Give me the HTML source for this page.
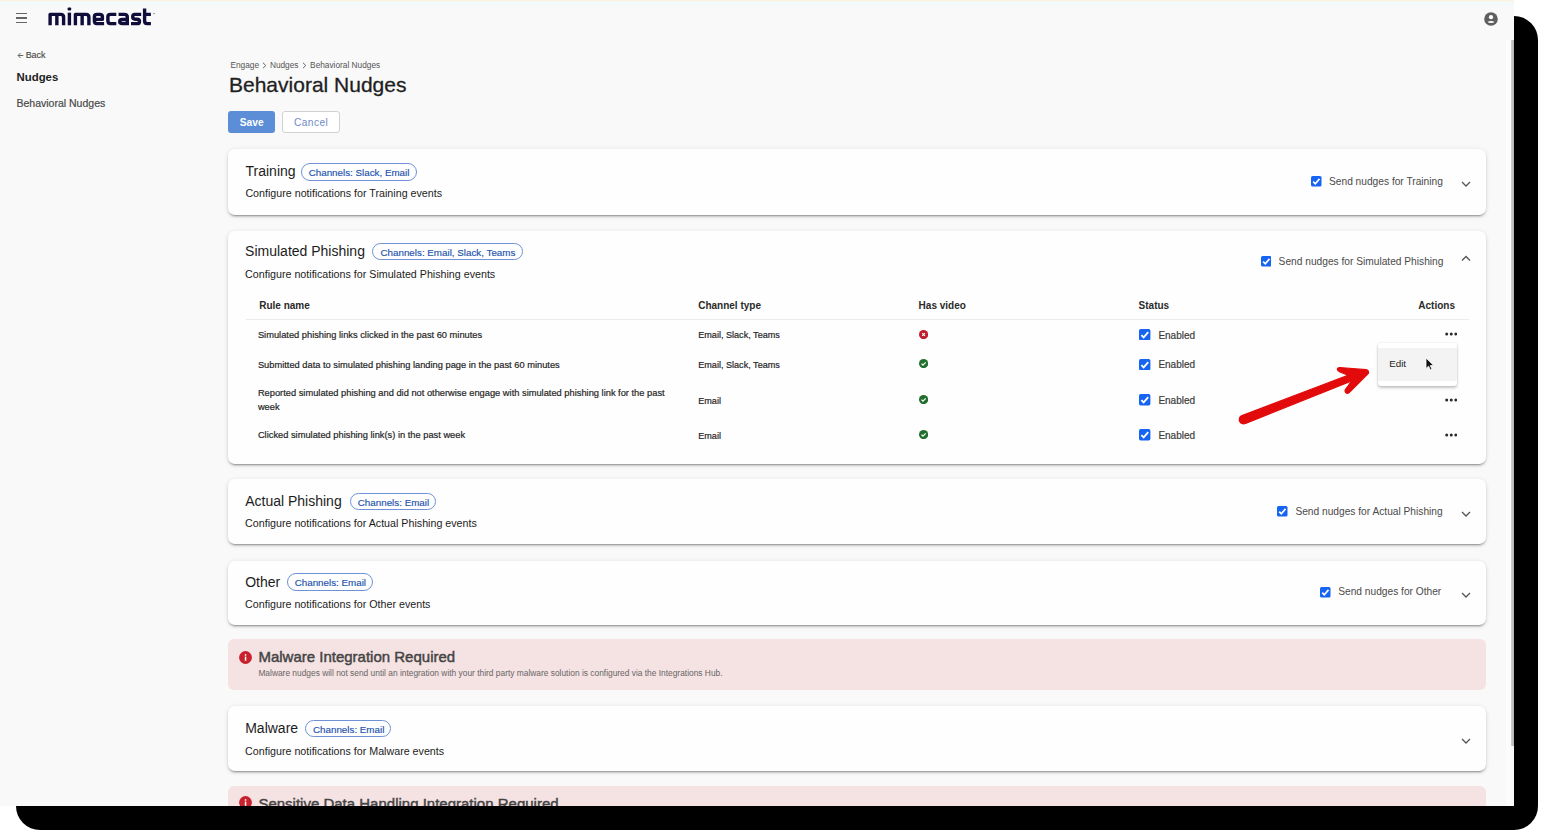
<!DOCTYPE html>
<html><head><meta charset="utf-8"><title>Behavioral Nudges</title>
<style>
html,body{margin:0;padding:0;background:#fff;width:1542px;height:835px;overflow:hidden;}
.shadow{position:absolute;left:16px;top:16px;width:1522px;height:813.5px;background:#000;border-radius:24px;}
.shot{position:absolute;left:0;top:0;width:1514px;height:806px;overflow:hidden;background:#f9f9f9;font-family:'Liberation Sans',sans-serif;}
.t{position:absolute;white-space:nowrap;line-height:1;font-family:'Liberation Sans',sans-serif;}
.topline{position:absolute;left:0;top:0;width:1514px;height:6px;background:linear-gradient(#fdf0dc 0,#fdf4e6 1.2px,#f1fbfd 1.8px,#f3f9fb 5px,#f8f8f9 6px);}
</style></head><body>
<div class="shadow"></div>
<div class="shot">
<div class="topline"></div>
<div style="position:absolute;left:16.2px;top:12.700000000000001px;width:11.100000000000001px;height:1.3999999999999986px;background:#666;"></div>
<div style="position:absolute;left:16.2px;top:17.2px;width:11.100000000000001px;height:1.3999999999999986px;background:#666;"></div>
<div style="position:absolute;left:16.2px;top:21.6px;width:11.100000000000001px;height:1.3999999999999986px;background:#666;"></div>
<svg style="position:absolute;left:0;top:0" width="170" height="35" viewBox="0 0 170 35"><g fill="none" stroke="#100d3a" stroke-width="3.4" stroke-linejoin="round"><path d="M50.1 25.3 V14.35 H60.8 Q63.6 14.35 63.6 17.15 V25.3 M56.85 14.35 V25.3"/><path d="M69.4 12.65 V25.3"/><path d="M75.4 25.3 V14.35 H86.1 Q88.9 14.35 88.9 17.15 V25.3 M82.15 14.35 V25.3"/><path d="M94.4 19.4 H102.4 V16.85 Q102.4 14.35 99.9 14.35 H96.9 Q94.4 14.35 94.4 16.85 V21.1 Q94.4 23.6 96.9 23.6 H104.1"/><path d="M116.3 14.35 H110.4 Q107.9 14.35 107.9 16.85 V21.1 Q107.9 23.6 110.4 23.6 H116.3"/><path d="M118.6 14.35 H124.5 Q127.3 14.35 127.3 17.15 V25.3 M127.3 19.5 H122.3 Q119.7 19.5 119.7 21.55 Q119.7 23.6 122.3 23.6 H127.3"/><path d="M141.2 14.35 H134.9 Q132.7 14.35 132.7 16.8 Q132.7 19.2 135.1 19.2 H137.1 Q139.5 19.2 139.5 21.4 Q139.5 23.6 137.1 23.6 H131"/><path d="M144.6 8.4 V21.1 Q144.6 23.6 147.1 23.6 H150.9 M143 14.35 H150.9"/></g><rect x="67.6" y="7.6" width="3.6" height="3" rx="1" fill="#100d3a"/><circle cx="154" cy="13.5" r="0.8" fill="#8a8aa0"/></svg>
<svg style="position:absolute;left:1483.5px;top:12px" width="14" height="14" viewBox="0 0 14 14"><circle cx="7" cy="7" r="6.8" fill="#5f5f5f"/><circle cx="7" cy="5.2" r="2.1" fill="#fff"/><path d="M3.6 9.7 Q7 8.3 10.4 9.7 Q10 11 7 11 Q4 11 3.6 9.7Z" fill="#fff"/></svg>
<div style="position:absolute;left:1506px;top:40px;width:5px;height:766px;background:#fcfcfc;"></div>
<div style="position:absolute;left:1511px;top:40px;width:3px;height:706px;background:linear-gradient(90deg,#cfcfcf,#b4b4b4);"></div>
<svg style="position:absolute;left:17px;top:52px" width="7" height="7" viewBox="0 0 7 7"><path d="M6.3 3.5 H1.2 M3.6 1 L1.1 3.5 L3.6 6" fill="none" stroke="#555" stroke-width="0.9"/></svg>
<div class="t" style="left:25.70px;top:50.55px;font-size:9px;color:#4a4a4a;font-weight:400;-webkit-text-stroke:0.15px #4a4a4a;letter-spacing:-0.1px;">Back</div>
<div class="t" style="left:16.50px;top:71.91px;font-size:11.4px;color:#1e1e1e;font-weight:700;">Nudges</div>
<div class="t" style="left:16.50px;top:98.08px;font-size:10.5px;color:#4a4a4a;font-weight:400;-webkit-text-stroke:0.2px #4a4a4a;">Behavioral Nudges</div>
<div class="t" style="left:230.40px;top:61.35px;font-size:8.3px;color:#555;font-weight:400;">Engage</div>
<svg style="position:absolute;left:262px;top:61.5px" width="5" height="7" viewBox="0 0 5 7"><path d="M1 0.8 L3.8 3.5 L1 6.2" fill="none" stroke="#555" stroke-width="0.9"/></svg>
<div class="t" style="left:269.90px;top:61.35px;font-size:8.3px;color:#555;font-weight:400;">Nudges</div>
<svg style="position:absolute;left:302.3px;top:61.5px" width="5" height="7" viewBox="0 0 5 7"><path d="M1 0.8 L3.8 3.5 L1 6.2" fill="none" stroke="#555" stroke-width="0.9"/></svg>
<div class="t" style="left:310.10px;top:61.35px;font-size:8.3px;color:#555;font-weight:400;">Behavioral Nudges</div>
<div class="t" style="left:229.00px;top:73.95px;font-size:21px;color:#1f1f1f;font-weight:400;-webkit-text-stroke:0.3px #1f1f1f;">Behavioral Nudges</div>
<div style="position:absolute;left:228px;top:111px;width:47px;height:22px;background:#5b8ed7;border-radius:3px;"></div>
<div class="t" style="left:239.70px;top:118.33px;font-size:10.2px;color:#fff;font-weight:700;letter-spacing:0.1px;">Save</div>
<div style="position:absolute;left:282px;top:111px;width:58px;height:22px;background:#fff;border:1px solid #d2d2d2;box-sizing:border-box;border-radius:3px;"></div>
<div class="t" style="left:294.00px;top:118.33px;font-size:10.2px;color:#6f8bc8;font-weight:400;letter-spacing:0.4px;">Cancel</div>
<div style="position:absolute;left:228px;top:149px;width:1258px;height:65.5px;background:#fefefe;border-radius:7px;box-shadow:0px 3px 1px -2px rgba(0,0,0,0.2),0px 2px 2px 0px rgba(0,0,0,0.14),0px 1px 5px 0px rgba(0,0,0,0.12);"></div>
<div class="t" style="left:245.50px;top:164.00px;font-size:14px;color:#1c1c1c;font-weight:400;">Training</div>
<div style="position:absolute;left:300.5px;top:162.5px;width:116.5px;height:18.0px;border:1px solid #6f92d6;border-radius:9px;box-sizing:border-box;"></div>
<div class="t" style="left:308.70px;top:167.97px;font-size:9.8px;color:#2252ac;font-weight:400;-webkit-text-stroke:0.15px #2252ac;">Channels: Slack, Email</div>
<div class="t" style="left:245.40px;top:188.41px;font-size:10.7px;color:#1c1c1c;font-weight:400;">Configure notifications for Training events</div>
<svg style="position:absolute;left:1311px;top:176px" width="10.5" height="10.5" viewBox="0 0 10 10"><rect x="0" y="0" width="10" height="10" rx="1.5" fill="#1664f2"/><path d="M2.1 5.3 L4.1 7.4 L8.1 2.7" fill="none" stroke="#fff" stroke-width="1.6"/></svg>
<div class="t" style="left:1329.00px;top:177.03px;font-size:10.2px;color:#4a4a4a;font-weight:400;">Send nudges for Training</div>
<svg style="position:absolute;left:1461px;top:180.5px" width="10" height="7" viewBox="0 0 10 7"><path d="M1 1 L5 5 L9 1" fill="none" stroke="#555" stroke-width="1.3"/></svg>
<div style="position:absolute;left:228px;top:230.5px;width:1258px;height:233.0px;background:#fefefe;border-radius:7px;box-shadow:0px 3px 1px -2px rgba(0,0,0,0.2),0px 2px 2px 0px rgba(0,0,0,0.14),0px 1px 5px 0px rgba(0,0,0,0.12);"></div>
<div class="t" style="left:245.10px;top:244.40px;font-size:14px;color:#1c1c1c;font-weight:400;">Simulated Phishing</div>
<div style="position:absolute;left:372.3px;top:243.2px;width:151.09999999999997px;height:17.30000000000001px;border:1px solid #6f92d6;border-radius:9px;box-sizing:border-box;"></div>
<div class="t" style="left:380.50px;top:247.97px;font-size:9.8px;color:#2252ac;font-weight:400;-webkit-text-stroke:0.15px #2252ac;">Channels: Email, Slack, Teams</div>
<div class="t" style="left:245.10px;top:269.00px;font-size:10.7px;color:#1c1c1c;font-weight:400;">Configure notifications for Simulated Phishing events</div>
<svg style="position:absolute;left:1260.5px;top:256.2px" width="10.5" height="10.5" viewBox="0 0 10 10"><rect x="0" y="0" width="10" height="10" rx="1.5" fill="#1664f2"/><path d="M2.1 5.3 L4.1 7.4 L8.1 2.7" fill="none" stroke="#fff" stroke-width="1.6"/></svg>
<div class="t" style="left:1278.60px;top:257.13px;font-size:10.2px;color:#4a4a4a;font-weight:400;">Send nudges for Simulated Phishing</div>
<svg style="position:absolute;left:1461px;top:254.8px" width="10" height="7" viewBox="0 0 10 7"><path d="M1 5.5 L5 1.5 L9 5.5" fill="none" stroke="#555" stroke-width="1.3"/></svg>
<div class="t" style="left:259.20px;top:300.80px;font-size:10px;color:#2a2a2a;font-weight:700;">Rule name</div>
<div class="t" style="left:698.20px;top:301.00px;font-size:10px;color:#2a2a2a;font-weight:700;">Channel type</div>
<div class="t" style="left:918.60px;top:301.00px;font-size:10px;color:#2a2a2a;font-weight:700;">Has video</div>
<div class="t" style="left:1138.60px;top:300.70px;font-size:10px;color:#2a2a2a;font-weight:700;">Status</div>
<div class="t" style="right:59.00px;top:300.70px;font-size:10px;color:#2a2a2a;font-weight:700;">Actions</div>
<div style="position:absolute;left:245.7px;top:319.2px;width:1223.0px;height:1.1999999999999886px;background:#ececec;"></div>
<div class="t" style="left:257.90px;top:331.10px;font-size:9.3px;color:#262626;font-weight:400;-webkit-text-stroke:0.2px #262626;">Simulated phishing links clicked in the past 60 minutes</div>
<div class="t" style="left:698.20px;top:331.46px;font-size:9.1px;color:#262626;font-weight:400;-webkit-text-stroke:0.2px #262626;">Email, Slack, Teams</div>
<svg style="position:absolute;left:918.5px;top:329.70px" width="9.2" height="9.2" viewBox="0 0 10 10"><circle cx="5" cy="5" r="5" fill="#bf1e2c"/><path d="M3.5 3.5 L6.5 6.5 M6.5 3.5 L3.5 6.5" fill="none" stroke="#fff" stroke-width="1.2"/></svg>
<svg style="position:absolute;left:1139.2px;top:329.0px" width="11.4" height="11.4" viewBox="0 0 10 10"><rect x="0" y="0" width="10" height="10" rx="1.5" fill="#1664f2"/><path d="M2.1 5.3 L4.1 7.4 L8.1 2.7" fill="none" stroke="#fff" stroke-width="1.6"/></svg>
<div class="t" style="left:1158.40px;top:330.50px;font-size:10px;color:#3c3c3c;font-weight:400;-webkit-text-stroke:0.2px #3c3c3c;">Enabled</div>
<svg style="position:absolute;left:1444.5px;top:332.30px" width="12.5" height="4" viewBox="0 0 12.5 4"><circle cx="1.7" cy="2" r="1.5" fill="#2a2a2a"/><circle cx="6.25" cy="2" r="1.5" fill="#2a2a2a"/><circle cx="10.8" cy="2" r="1.5" fill="#2a2a2a"/></svg>
<div class="t" style="left:257.90px;top:360.70px;font-size:9.3px;color:#262626;font-weight:400;-webkit-text-stroke:0.2px #262626;">Submitted data to simulated phishing landing page in the past 60 minutes</div>
<div class="t" style="left:698.20px;top:361.06px;font-size:9.1px;color:#262626;font-weight:400;-webkit-text-stroke:0.2px #262626;">Email, Slack, Teams</div>
<svg style="position:absolute;left:918.5px;top:359.30px" width="9.2" height="9.2" viewBox="0 0 10 10"><circle cx="5" cy="5" r="5" fill="#216f2e"/><path d="M2.7 5.1 L4.3 6.7 L7.3 3.6" fill="none" stroke="#fff" stroke-width="1.3"/></svg>
<svg style="position:absolute;left:1139.2px;top:358.6px" width="11.4" height="11.4" viewBox="0 0 10 10"><rect x="0" y="0" width="10" height="10" rx="1.5" fill="#1664f2"/><path d="M2.1 5.3 L4.1 7.4 L8.1 2.7" fill="none" stroke="#fff" stroke-width="1.6"/></svg>
<div class="t" style="left:1158.40px;top:360.10px;font-size:10px;color:#3c3c3c;font-weight:400;-webkit-text-stroke:0.2px #3c3c3c;">Enabled</div>
<svg style="position:absolute;left:1444.5px;top:361.90px" width="12.5" height="4" viewBox="0 0 12.5 4"><circle cx="1.7" cy="2" r="1.5" fill="#2a2a2a"/><circle cx="6.25" cy="2" r="1.5" fill="#2a2a2a"/><circle cx="10.8" cy="2" r="1.5" fill="#2a2a2a"/></svg>
<div class="t" style="left:257.90px;top:389.10px;font-size:9.3px;color:#262626;font-weight:400;-webkit-text-stroke:0.2px #262626;">Reported simulated phishing and did not otherwise engage with simulated phishing link for the past</div>
<div class="t" style="left:257.90px;top:402.70px;font-size:9.3px;color:#262626;font-weight:400;-webkit-text-stroke:0.2px #262626;">week</div>
<div class="t" style="left:698.20px;top:396.66px;font-size:9.1px;color:#262626;font-weight:400;-webkit-text-stroke:0.2px #262626;">Email</div>
<svg style="position:absolute;left:918.5px;top:394.90px" width="9.2" height="9.2" viewBox="0 0 10 10"><circle cx="5" cy="5" r="5" fill="#216f2e"/><path d="M2.7 5.1 L4.3 6.7 L7.3 3.6" fill="none" stroke="#fff" stroke-width="1.3"/></svg>
<svg style="position:absolute;left:1139.2px;top:394.2px" width="11.4" height="11.4" viewBox="0 0 10 10"><rect x="0" y="0" width="10" height="10" rx="1.5" fill="#1664f2"/><path d="M2.1 5.3 L4.1 7.4 L8.1 2.7" fill="none" stroke="#fff" stroke-width="1.6"/></svg>
<div class="t" style="left:1158.40px;top:395.70px;font-size:10px;color:#3c3c3c;font-weight:400;-webkit-text-stroke:0.2px #3c3c3c;">Enabled</div>
<svg style="position:absolute;left:1444.5px;top:397.50px" width="12.5" height="4" viewBox="0 0 12.5 4"><circle cx="1.7" cy="2" r="1.5" fill="#2a2a2a"/><circle cx="6.25" cy="2" r="1.5" fill="#2a2a2a"/><circle cx="10.8" cy="2" r="1.5" fill="#2a2a2a"/></svg>
<div class="t" style="left:257.90px;top:431.30px;font-size:9.3px;color:#262626;font-weight:400;-webkit-text-stroke:0.2px #262626;">Clicked simulated phishing link(s) in the past week</div>
<div class="t" style="left:698.20px;top:431.66px;font-size:9.1px;color:#262626;font-weight:400;-webkit-text-stroke:0.2px #262626;">Email</div>
<svg style="position:absolute;left:918.5px;top:429.90px" width="9.2" height="9.2" viewBox="0 0 10 10"><circle cx="5" cy="5" r="5" fill="#216f2e"/><path d="M2.7 5.1 L4.3 6.7 L7.3 3.6" fill="none" stroke="#fff" stroke-width="1.3"/></svg>
<svg style="position:absolute;left:1139.2px;top:429.2px" width="11.4" height="11.4" viewBox="0 0 10 10"><rect x="0" y="0" width="10" height="10" rx="1.5" fill="#1664f2"/><path d="M2.1 5.3 L4.1 7.4 L8.1 2.7" fill="none" stroke="#fff" stroke-width="1.6"/></svg>
<div class="t" style="left:1158.40px;top:430.70px;font-size:10px;color:#3c3c3c;font-weight:400;-webkit-text-stroke:0.2px #3c3c3c;">Enabled</div>
<svg style="position:absolute;left:1444.5px;top:432.50px" width="12.5" height="4" viewBox="0 0 12.5 4"><circle cx="1.7" cy="2" r="1.5" fill="#2a2a2a"/><circle cx="6.25" cy="2" r="1.5" fill="#2a2a2a"/><circle cx="10.8" cy="2" r="1.5" fill="#2a2a2a"/></svg>
<div style="position:absolute;left:1378px;top:342.5px;width:79px;height:43.5px;background:#fff;border-radius:3px;box-shadow:0 2px 3px rgba(0,0,0,0.22),0 0 2px rgba(0,0,0,0.12);"></div>
<div style="position:absolute;left:1378px;top:347.5px;width:79px;height:33.0px;background:#f3f3f3;"></div>
<div class="t" style="left:1389.20px;top:359.27px;font-size:9.8px;color:#262626;font-weight:400;">Edit</div>
<svg style="position:absolute;left:1424.5px;top:357px" width="9" height="14" viewBox="0 0 9 14"><path d="M1 1 L1 11.5 L3.6 9.2 L5.4 13 L7 12.3 L5.3 8.6 L8.6 8.4 Z" fill="#111" stroke="#fff" stroke-width="0.8"/></svg>
<svg style="position:absolute;left:0;top:0" width="1514" height="806" viewBox="0 0 1514 806"><g fill="#e20a0a" stroke="#e20a0a" stroke-width="1.2" stroke-linejoin="round"><path d="M1242 415.6 L1348 375.3 L1339.4 371.6 Q1337 370.6 1337.4 368.8 Q1338 367.4 1339.6 367.5 L1366 369.7 Q1369 370.3 1368.4 373.3 L1349.2 392.5 Q1347.3 394 1345.7 392.6 Q1344.6 391.3 1345.4 389.6 L1351.6 381 L1245.5 423.4 Q1241.5 424.8 1239.6 421.5 Q1238.5 417.3 1242 415.6 Z"/></g></svg>
<div style="position:absolute;left:228px;top:479px;width:1258px;height:65px;background:#fefefe;border-radius:7px;box-shadow:0px 3px 1px -2px rgba(0,0,0,0.2),0px 2px 2px 0px rgba(0,0,0,0.14),0px 1px 5px 0px rgba(0,0,0,0.12);"></div>
<div class="t" style="left:245.20px;top:493.70px;font-size:14px;color:#1c1c1c;font-weight:400;">Actual Phishing</div>
<div style="position:absolute;left:349.6px;top:492.8px;width:86.39999999999998px;height:17.5px;border:1px solid #6f92d6;border-radius:9px;box-sizing:border-box;"></div>
<div class="t" style="left:357.80px;top:497.77px;font-size:9.8px;color:#2252ac;font-weight:400;-webkit-text-stroke:0.15px #2252ac;">Channels: Email</div>
<div class="t" style="left:245.10px;top:518.11px;font-size:10.7px;color:#1c1c1c;font-weight:400;">Configure notifications for Actual Phishing events</div>
<svg style="position:absolute;left:1277px;top:506.4px" width="10.5" height="10.5" viewBox="0 0 10 10"><rect x="0" y="0" width="10" height="10" rx="1.5" fill="#1664f2"/><path d="M2.1 5.3 L4.1 7.4 L8.1 2.7" fill="none" stroke="#fff" stroke-width="1.6"/></svg>
<div class="t" style="left:1295.40px;top:506.83px;font-size:10.2px;color:#4a4a4a;font-weight:400;">Send nudges for Actual Phishing</div>
<svg style="position:absolute;left:1461px;top:511px" width="10" height="7" viewBox="0 0 10 7"><path d="M1 1 L5 5 L9 1" fill="none" stroke="#555" stroke-width="1.3"/></svg>
<div style="position:absolute;left:228px;top:560.5px;width:1258px;height:64.0px;background:#fefefe;border-radius:7px;box-shadow:0px 3px 1px -2px rgba(0,0,0,0.2),0px 2px 2px 0px rgba(0,0,0,0.14),0px 1px 5px 0px rgba(0,0,0,0.12);"></div>
<div class="t" style="left:245.20px;top:574.60px;font-size:14px;color:#1c1c1c;font-weight:400;">Other</div>
<div style="position:absolute;left:286.5px;top:573.3px;width:86.5px;height:17.5px;border:1px solid #6f92d6;border-radius:9px;box-sizing:border-box;"></div>
<div class="t" style="left:294.70px;top:578.27px;font-size:9.8px;color:#2252ac;font-weight:400;-webkit-text-stroke:0.15px #2252ac;">Channels: Email</div>
<div class="t" style="left:245.10px;top:599.20px;font-size:10.7px;color:#1c1c1c;font-weight:400;">Configure notifications for Other events</div>
<svg style="position:absolute;left:1320.4px;top:587px" width="10.5" height="10.5" viewBox="0 0 10 10"><rect x="0" y="0" width="10" height="10" rx="1.5" fill="#1664f2"/><path d="M2.1 5.3 L4.1 7.4 L8.1 2.7" fill="none" stroke="#fff" stroke-width="1.6"/></svg>
<div class="t" style="left:1338.20px;top:587.33px;font-size:10.2px;color:#4a4a4a;font-weight:400;">Send nudges for Other</div>
<svg style="position:absolute;left:1461px;top:591.5px" width="10" height="7" viewBox="0 0 10 7"><path d="M1 1 L5 5 L9 1" fill="none" stroke="#555" stroke-width="1.3"/></svg>
<div style="position:absolute;left:228px;top:639px;width:1258px;height:51px;background:#f5e2e2;border-radius:6px;"></div>
<svg style="position:absolute;left:238.5px;top:650.5px" width="13" height="13" viewBox="0 0 13 13"><circle cx="6.5" cy="6.5" r="6.4" fill="#c8202c"/><rect x="5.8" y="5.6" width="1.5" height="4.2" fill="#fff"/><circle cx="6.55" cy="3.9" r="0.85" fill="#fff"/></svg>
<div class="t" style="left:258.40px;top:649.15px;font-size:15px;color:#444;font-weight:400;-webkit-text-stroke:0.45px #444;">Malware Integration Required</div>
<div class="t" style="left:258.40px;top:669.26px;font-size:8.4px;color:#666;font-weight:400;">Malware nudges will not send until an integration with your third party malware solution is configured via the Integrations Hub.</div>
<div style="position:absolute;left:228px;top:705.5px;width:1258px;height:65.70000000000005px;background:#fefefe;border-radius:7px;box-shadow:0px 3px 1px -2px rgba(0,0,0,0.2),0px 2px 2px 0px rgba(0,0,0,0.14),0px 1px 5px 0px rgba(0,0,0,0.12);"></div>
<div class="t" style="left:245.20px;top:720.50px;font-size:14px;color:#1c1c1c;font-weight:400;">Malware</div>
<div style="position:absolute;left:304.8px;top:720.1px;width:86.69999999999999px;height:17.299999999999955px;border:1px solid #6f92d6;border-radius:9px;box-sizing:border-box;"></div>
<div class="t" style="left:313.00px;top:724.87px;font-size:9.8px;color:#2252ac;font-weight:400;-webkit-text-stroke:0.15px #2252ac;">Channels: Email</div>
<div class="t" style="left:245.10px;top:745.50px;font-size:10.7px;color:#1c1c1c;font-weight:400;">Configure notifications for Malware events</div>
<svg style="position:absolute;left:1461px;top:737.8px" width="10" height="7" viewBox="0 0 10 7"><path d="M1 1 L5 5 L9 1" fill="none" stroke="#555" stroke-width="1.3"/></svg>
<div style="position:absolute;left:228px;top:785.7px;width:1258px;height:54.299999999999955px;background:#f5e2e2;border-radius:6px;"></div>
<svg style="position:absolute;left:238.5px;top:796px" width="13" height="13" viewBox="0 0 13 13"><circle cx="6.5" cy="6.5" r="6.4" fill="#c8202c"/><rect x="5.8" y="5.6" width="1.5" height="4.2" fill="#fff"/><circle cx="6.55" cy="3.9" r="0.85" fill="#fff"/></svg>
<div class="t" style="left:258.40px;top:795.65px;font-size:15px;color:#444;font-weight:400;-webkit-text-stroke:0.45px #444;">Sensitive Data Handling Integration Required</div>
</div>
</body></html>
